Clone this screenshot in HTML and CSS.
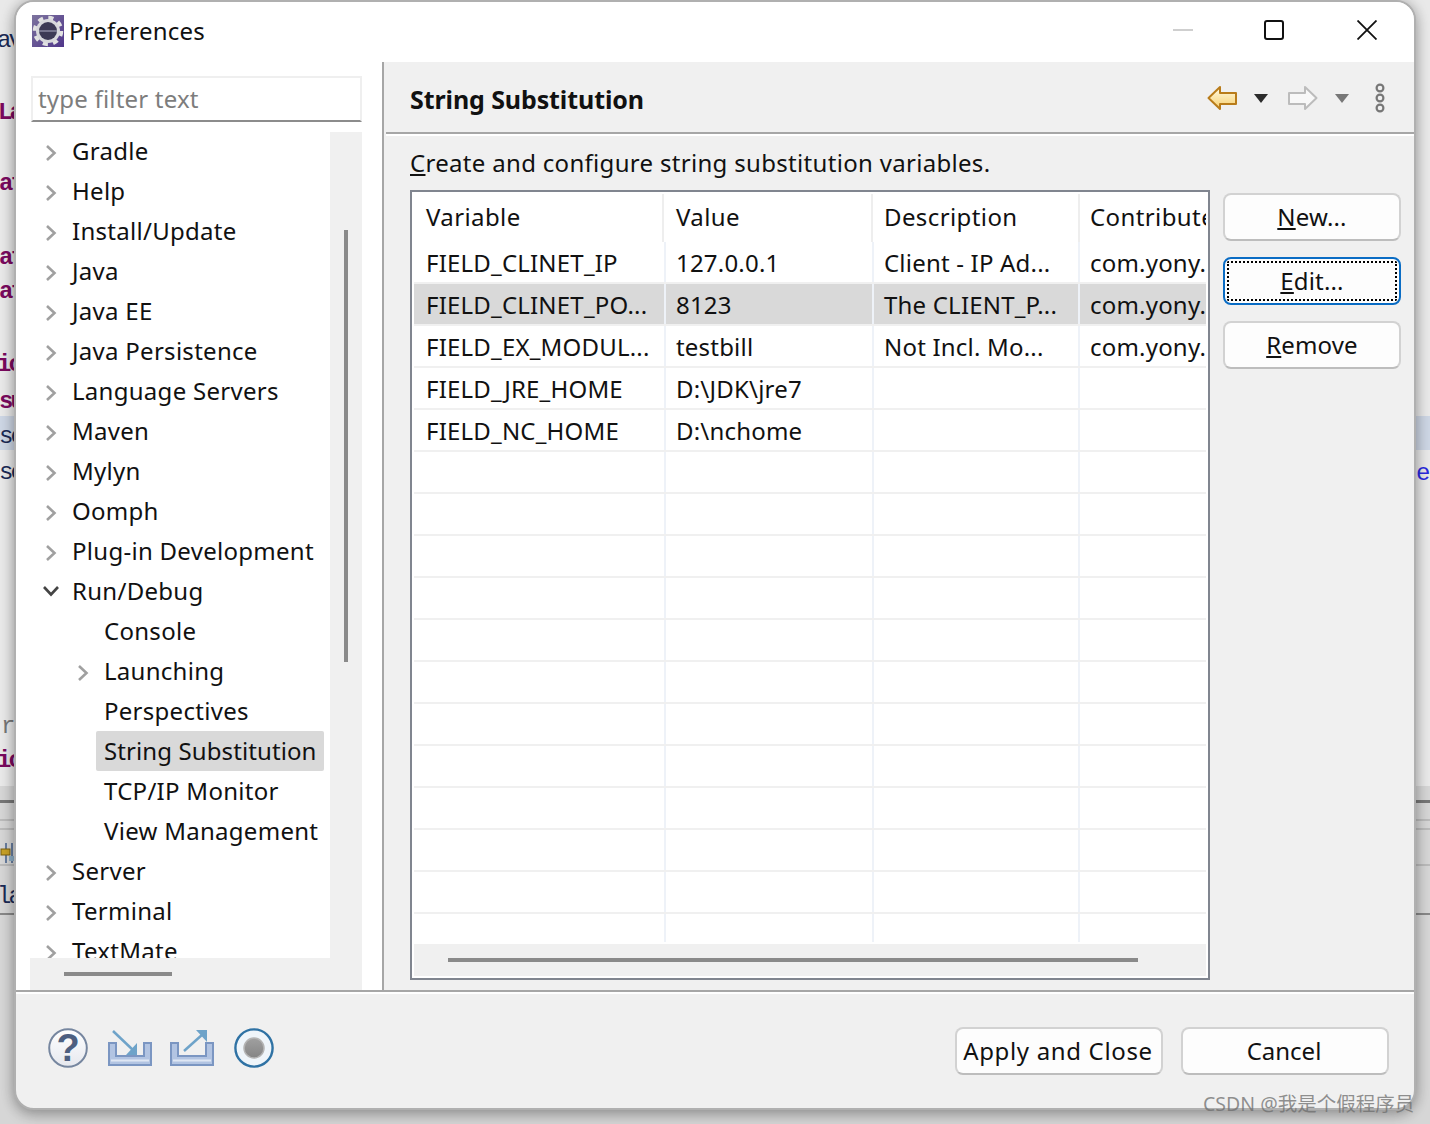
FILE: index.html
```html
<!DOCTYPE html>
<html lang="en">
<head>
<meta charset="utf-8">
<title>Preferences</title>
<link rel="stylesheet" href="styles.css">
</head>
<body>
<div class="desk">
  <div class="band band-hl"></div>
  <div class="band band-low"></div>
  <div class="band band-dark"></div>
  <div class="band line-a"></div>
  <div class="band line-b"></div>
  <div class="band line-c"></div>
  <div class="band line-d"></div>
  <span class="frag navy f1">av</span>
  <span class="frag purple f2">La</span>
  <span class="frag purple f3">at</span>
  <span class="frag purple f4">at</span>
  <span class="frag purple f5">at</span>
  <span class="frag purple f6">ic</span>
  <span class="frag purple f7">su</span>
  <span class="frag navy f8">se</span>
  <span class="frag navy f9">se</span>
  <span class="frag grey f10">rr</span>
  <span class="frag purple f11">ic</span>
  <span class="frag navy f12">la</span>
  <span class="frag blue f13">e</span>
  <svg class="frag f14" width="16" height="24" viewBox="0 0 16 24"><path d="M6 0V20M12 0V20" stroke="#44618f" stroke-width="1.5"/><rect x="1" y="6" width="9" height="6" fill="#c9a227" stroke="#7b6012"/><rect x="9" y="13" width="7" height="5" fill="#8fb0c8"/></svg>
</div>

<main class="window">
  <header class="titlebar">
    <div class="title-left">
      <svg class="app-icon" width="32" height="32" viewBox="0 0 32 32">
        <defs><linearGradient id="pg" x1="0" y1="0" x2="1" y2="1"><stop offset="0" stop-color="#7d749e"/><stop offset="1" stop-color="#50368a"/></linearGradient></defs>
        <rect width="32" height="32" fill="url(#pg)"/>
        <circle cx="16" cy="16" r="13" fill="none" stroke="#e2e2e2" stroke-width="4.500" stroke-dasharray="5 5.200"/>
        <circle cx="16" cy="16" r="12" fill="#d8d8dc"/>
        <circle cx="16" cy="16" r="9" fill="#3d3a55"/>
        <path d="M7 16H25" stroke="#8a88a0" stroke-width="1.500"/>
      </svg>
      <span class="title-text">Preferences</span>
    </div>
    <div class="win-controls">
      <svg width="20" height="20" viewBox="0 0 20 20"><path d="M0 10H20" stroke="#cfcfcf" stroke-width="2"/></svg>
      <svg width="20" height="20" viewBox="0 0 20 20"><rect x="1" y="1" width="18" height="18" rx="2" fill="none" stroke="#111" stroke-width="2"/></svg>
      <svg width="20" height="20" viewBox="0 0 20 20"><path d="M0.5 0.5L19.5 19.5M19.5 0.5L0.5 19.5" stroke="#111" stroke-width="1.800"/></svg>
    </div>
  </header>

  <div class="main">
    <aside class="nav">
      <input class="filter" type="text" placeholder="type filter text">
      <div class="tree-area">
        <ul class="tree">
          <li class="node"><svg class="chev" width="12" height="18" viewBox="0 0 12 18"><path d="M2 2L9.500 9L2 16"/></svg><span>Gradle</span></li>
          <li class="node"><svg class="chev" width="12" height="18" viewBox="0 0 12 18"><path d="M2 2L9.500 9L2 16"/></svg><span>Help</span></li>
          <li class="node"><svg class="chev" width="12" height="18" viewBox="0 0 12 18"><path d="M2 2L9.500 9L2 16"/></svg><span>Install/Update</span></li>
          <li class="node"><svg class="chev" width="12" height="18" viewBox="0 0 12 18"><path d="M2 2L9.500 9L2 16"/></svg><span>Java</span></li>
          <li class="node"><svg class="chev" width="12" height="18" viewBox="0 0 12 18"><path d="M2 2L9.500 9L2 16"/></svg><span>Java EE</span></li>
          <li class="node"><svg class="chev" width="12" height="18" viewBox="0 0 12 18"><path d="M2 2L9.500 9L2 16"/></svg><span>Java Persistence</span></li>
          <li class="node"><svg class="chev" width="12" height="18" viewBox="0 0 12 18"><path d="M2 2L9.500 9L2 16"/></svg><span>Language Servers</span></li>
          <li class="node"><svg class="chev" width="12" height="18" viewBox="0 0 12 18"><path d="M2 2L9.500 9L2 16"/></svg><span>Maven</span></li>
          <li class="node"><svg class="chev" width="12" height="18" viewBox="0 0 12 18"><path d="M2 2L9.500 9L2 16"/></svg><span>Mylyn</span></li>
          <li class="node"><svg class="chev" width="12" height="18" viewBox="0 0 12 18"><path d="M2 2L9.500 9L2 16"/></svg><span>Oomph</span></li>
          <li class="node"><svg class="chev" width="12" height="18" viewBox="0 0 12 18"><path d="M2 2L9.500 9L2 16"/></svg><span>Plug-in Development</span></li>
          <li class="node"><svg class="chev-down" width="18" height="12" viewBox="0 0 18 12"><path d="M2 2L9 9.500L16 2"/></svg><span>Run/Debug</span></li>
          <li class="node child"><span>Console</span></li>
          <li class="node child-exp"><svg class="chev" width="12" height="18" viewBox="0 0 12 18"><path d="M2 2L9.500 9L2 16"/></svg><span>Launching</span></li>
          <li class="node child"><span>Perspectives</span></li>
          <li class="node child selected"><span>String Substitution</span></li>
          <li class="node child"><span>TCP/IP Monitor</span></li>
          <li class="node child"><span>View Management</span></li>
          <li class="node"><svg class="chev" width="12" height="18" viewBox="0 0 12 18"><path d="M2 2L9.500 9L2 16"/></svg><span>Server</span></li>
          <li class="node"><svg class="chev" width="12" height="18" viewBox="0 0 12 18"><path d="M2 2L9.500 9L2 16"/></svg><span>Terminal</span></li>
          <li class="node"><svg class="chev" width="12" height="18" viewBox="0 0 12 18"><path d="M2 2L9.500 9L2 16"/></svg><span>TextMate</span></li>
        </ul>
        <div class="vtrack"><div class="vthumb"></div></div>
      </div>
      <div class="htrack"><div class="hthumb"></div></div>
    </aside>
    <div class="sash"></div>

    <section class="page">
      <div class="page-head">
        <h1 class="page-title">String Substitution</h1>
        <div class="page-tools">
          <svg width="30" height="26" viewBox="0 0 30 26"><defs><linearGradient id="ya" x1="0" y1="0" x2="0" y2="1"><stop offset="0" stop-color="#fffbe6"/><stop offset="1" stop-color="#f7cf6c"/></linearGradient></defs><path d="M1.500 13L13 2V8H29V19H13V24Z" fill="url(#ya)" stroke="#b97c1a" stroke-width="2" stroke-linejoin="round"/></svg>
          <svg class="caret" width="14" height="9" viewBox="0 0 14 9"><path d="M0 0H14L7 9Z" fill="#2b2b2b"/></svg>
          <svg class="fwd" width="30" height="26" viewBox="0 0 30 26"><path d="M28.500 13L17 2V8H1V19H17V24Z" fill="#f8f8f8" stroke="#bcbcbc" stroke-width="2" stroke-linejoin="round"/></svg>
          <svg class="caret" width="14" height="9" viewBox="0 0 14 9"><path d="M0 0H14L7 9Z" fill="#777"/></svg>
          <svg class="menu" width="10" height="30" viewBox="0 0 10 30"><g fill="none" stroke="#777" stroke-width="2.200"><circle cx="5" cy="5" r="3.400"/><circle cx="5" cy="15" r="3.400"/><circle cx="5" cy="25" r="3.400"/></g></svg>
        </div>
      </div>
      <div class="page-body">
        <p class="desc"><u>C</u>reate and configure string substitution variables.</p>
        <div class="editor">
          <div class="table">
            <div class="thead">
              <div class="th">Variable</div>
              <div class="th">Value</div>
              <div class="th">Description</div>
              <div class="th">Contributed By</div>
            </div>
            <div class="tbody">
              <div class="tr"><div class="td">FIELD_CLINET_IP</div><div class="td">127.0.0.1</div><div class="td">Client - IP Ad...</div><div class="td">com.yony.studio</div></div>
              <div class="tr sel"><div class="td">FIELD_CLINET_PO...</div><div class="td">8123</div><div class="td">The CLIENT_P...</div><div class="td">com.yony.studio</div></div>
              <div class="tr"><div class="td">FIELD_EX_MODUL...</div><div class="td">testbill</div><div class="td">Not Incl. Mo...</div><div class="td">com.yony.studio</div></div>
              <div class="tr"><div class="td">FIELD_JRE_HOME</div><div class="td">D:\JDK\jre7</div><div class="td"></div><div class="td"></div></div>
              <div class="tr"><div class="td">FIELD_NC_HOME</div><div class="td">D:\nchome</div><div class="td"></div><div class="td"></div></div>
              <div class="tr"><div class="td"></div><div class="td"></div><div class="td"></div><div class="td"></div></div>
              <div class="tr"><div class="td"></div><div class="td"></div><div class="td"></div><div class="td"></div></div>
              <div class="tr"><div class="td"></div><div class="td"></div><div class="td"></div><div class="td"></div></div>
              <div class="tr"><div class="td"></div><div class="td"></div><div class="td"></div><div class="td"></div></div>
              <div class="tr"><div class="td"></div><div class="td"></div><div class="td"></div><div class="td"></div></div>
              <div class="tr"><div class="td"></div><div class="td"></div><div class="td"></div><div class="td"></div></div>
              <div class="tr"><div class="td"></div><div class="td"></div><div class="td"></div><div class="td"></div></div>
              <div class="tr"><div class="td"></div><div class="td"></div><div class="td"></div><div class="td"></div></div>
              <div class="tr"><div class="td"></div><div class="td"></div><div class="td"></div><div class="td"></div></div>
              <div class="tr"><div class="td"></div><div class="td"></div><div class="td"></div><div class="td"></div></div>
              <div class="tr"><div class="td"></div><div class="td"></div><div class="td"></div><div class="td"></div></div>
              <div class="tr"><div class="td"></div><div class="td"></div><div class="td"></div><div class="td"></div></div>
            </div>
            <div class="table-scroll"><div class="table-thumb"></div></div>
          </div>
          <div class="side-buttons">
            <button class="btn"><u>N</u>ew...</button>
            <button class="btn focus"><span class="focus-ring"><u>E</u>dit...</span></button>
            <button class="btn"><u>R</u>emove</button>
          </div>
        </div>
      </div>
    </section>
  </div>

  <footer class="footer">
    <div class="foot-icons">
      <svg width="40" height="40" viewBox="0 0 40 40"><defs><linearGradient id="hg" x1="0" y1="0" x2="0" y2="1"><stop offset="0" stop-color="#fff"/><stop offset="1" stop-color="#e6e8ee"/></linearGradient></defs><circle cx="20" cy="20" r="18.800" fill="url(#hg)" stroke="#76869f" stroke-width="2"/><text class="help-mark" x="20" y="33" text-anchor="middle">?</text></svg>
      <svg width="44" height="36" viewBox="0 0 44 36"><path d="M1 13H8V26H36V13H43V35H1Z" fill="#b2c4e2" stroke="#7b96c2" stroke-width="2"/><path d="M3 30.500H41" stroke="#dfe7f4" stroke-width="2"/><path d="M5 1L26 21" stroke="#6ea3c9" stroke-width="2.500"/><path d="M29 25H18L29 13Z" fill="#6ea3c9"/></svg>
      <svg width="44" height="36" viewBox="0 0 44 36"><path d="M1 13H8V26H36V13H43V35H1Z" fill="#b2c4e2" stroke="#7b96c2" stroke-width="2"/><path d="M3 30.500H41" stroke="#dfe7f4" stroke-width="2"/><path d="M14 21L33 4" stroke="#6ea3c9" stroke-width="2.500"/><path d="M37 0H26L37 12Z" fill="#6ea3c9"/></svg>
      <svg width="40" height="40" viewBox="0 0 40 40"><defs><linearGradient id="rg" x1="0" y1="0" x2="0" y2="1"><stop offset="0" stop-color="#a0a0a0"/><stop offset="1" stop-color="#858585"/></linearGradient></defs><circle cx="20" cy="20" r="18.600" fill="#eff5fa" stroke="#2f72a4" stroke-width="2.400"/><circle cx="20" cy="20" r="10" fill="url(#rg)" stroke="#b4b4b4" stroke-width="1.500"/></svg>
    </div>
    <div class="foot-buttons">
      <button class="btn wide spaced">Apply and Close</button>
      <button class="btn wide">Cancel</button>
    </div>
  </footer>
</main>
<div class="watermark">CSDN @我是个假程序员</div>
</body>
</html>
```
FILE: styles.css
```css
* { box-sizing: border-box; }
html, body { margin: 0; height: 100%; }
body {
  width: 1430px;
  height: 1124px;
  overflow: hidden;
  position: relative;
  background: #e9e9e9;
  font-family: "Noto Sans", "Noto Sans CJK SC", sans-serif;
  font-size: 24px;
  color: #111;
}
.desk { position: absolute; inset: 0; overflow: hidden; }
.band { position: absolute; left: 0; width: 100%; }
.band-hl { top: 416px; height: 34px; background: #cdd6e4; }
.band-low { top: 786px; bottom: 0; background: #d6d6d6; }
.band-dark { top: 800px; height: 3px; background: #777; }
.line-a { top: 819px; height: 2px; background: #bbb; }
.line-b { top: 828px; height: 2px; background: #bbb; }
.line-c { top: 864px; height: 2px; background: #bbb; }
.line-d { top: 913px; height: 2px; background: #888; }
.frag { position: absolute; font-family: "Liberation Mono", monospace; font-size: 24px; line-height: 30px; letter-spacing: -3px; white-space: nowrap; }
.navy { color: #1a2a55; }
.purple { color: #7a0a5e; font-weight: 700; }
.grey { color: #777; }
.blue { color: #2a2ae0; }
.f1 { left: -3px; top: 26px; }
.f2 { left: -2px; top: 98px; }
.f3 { left: -1px; top: 169px; }
.f4 { left: -1px; top: 243px; }
.f5 { left: -1px; top: 277px; }
.f6 { left: -3px; top: 350px; }
.f7 { left: -1px; top: 387px; }
.f8 { left: -1px; top: 422px; }
.f9 { left: -1px; top: 458px; }
.f10 { left: 1px; top: 712px; }
.f11 { left: -3px; top: 746px; }
.f12 { left: -3px; top: 882px; }
.f13 { left: 1416px; top: 459px; }
.f14 { left: 0; top: 843px; }

.window {
  position: absolute;
  left: 14px;
  top: 0;
  width: 1402px;
  height: 1110px;
  display: flex;
  flex-direction: column;
  background: #f0f0f0;
  border: 2px solid #b0b0b0;
  border-radius: 20px;
  box-shadow: 0 0 14px rgba(0,0,0,.22), 0 6px 14px rgba(0,0,0,.2);
  overflow: hidden;
}
.titlebar {
  height: 60px;
  flex: none;
  background: #fff;
  display: flex;
  justify-content: space-between;
  align-items: center;
  padding: 0 37px 0 16px;
}
.title-left { display: flex; align-items: center; gap: 5px; margin-top: -3px; }
.app-icon { display: block; }
.title-text { font-size: 24px; letter-spacing: .2px; color: #111; line-height: 32px; }
.win-controls { display: flex; gap: 73px; margin-top: -4px; }
.win-controls svg { display: block; }
.win-controls svg:first-child { margin-right: -2px; }

.main { flex: 1; min-height: 0; display: flex; }
.nav {
  width: 366px;
  flex: none;
  background: #fff;
  padding: 14px 20px 0 14px;
  display: flex;
  flex-direction: column;
}
.filter {
  display: block;
  width: 331px;
  height: 46px;
  margin-left: 1px;
  padding: 0 5px 2px;
  border: 2px solid #efefef;
  border-bottom-color: #8c8c8c;
  font: inherit;
  font-size: 24px;
  letter-spacing: .2px;
  outline: none;
  background: #fff;
  flex: none;
}
.filter::placeholder { color: #7d7d7d; opacity: 1; }
.tree-area { margin-top: 10px; width: 332px; height: 826px; display: flex; flex: none; }
.tree { list-style: none; margin: 0; padding: 0; width: 300px; height: 100%; overflow: hidden; background: #fff; }
.node { height: 40px; display: flex; align-items: center; padding-left: 15px; white-space: nowrap; }
.node span { margin-left: 15px; height: 40px; line-height: 40px; font-size: 24px; letter-spacing: .28px; color: #111; }
.tree .node:first-child { margin-top: -1px; }
.chev { flex: none; margin-top: 3px; }
.chev path { fill: none; stroke: #a0a0a0; stroke-width: 2.6; }
.chev-down { flex: none; margin-left: -3px; margin-right: -3px; }
.chev-down path { fill: none; stroke: #444; stroke-width: 2.6; }
.child { padding-left: 66px; }
.child span { margin-left: 0; padding: 0 8px; width: 228px; }
.child-exp { padding-left: 47px; }
.selected span { background: #d9d9d9; border-radius: 2px; letter-spacing: .1px; }
.vtrack { width: 32px; background: #f0f0f0; padding: 98px 0 0 14px; }
.vthumb { width: 4px; height: 432px; background: #8a8a8a; }
.htrack { width: 332px; height: 32px; background: #f0f0f0; padding: 14px 0 0 34px; flex: none; }
.hthumb { width: 108px; height: 4px; background: #8a8a8a; }
.sash { width: 2px; flex: none; background: #a6a6a6; }

.page { flex: 1; min-width: 0; display: flex; flex-direction: column; }
.page-head {
  height: 72px;
  flex: none;
  margin-left: 2px;
  border-bottom: 2px solid #a6a6a6;
  box-shadow: 0 2px 0 #fff;
  display: flex;
  align-items: center;
  justify-content: space-between;
  padding: 4px 29px 0 24px;
}
.page-title { margin: 0; font-size: 25px; letter-spacing: -.1px; font-weight: 700; color: #111; }
.page-tools { display: flex; align-items: center; margin-top: -2px; }
.page-tools svg { display: block; flex: none; }
.caret { margin-left: 17px; }
.fwd { margin-left: 20px; }
.menu { margin-left: 26px; }
.page-body { flex: 1; min-height: 0; padding: 0 13px 0 26px; }
.desc { margin: 0; height: 56px; line-height: 58px; font-size: 24px; letter-spacing: .31px; }
.editor { display: flex; gap: 13px; }
.table {
  width: 800px;
  height: 790px;
  flex: none;
  border: 2px solid #80858f;
  background: #fff;
  padding: 0 2px;
  display: flex;
  flex-direction: column;
}
.thead { height: 50px; flex: none; display: grid; grid-template-columns: 248px 207px 205px 1fr; column-gap: 2px; align-items: center; background: linear-gradient(#fff 2px, #eee 2px); }
.th { height: 100%; background: #fff; padding: 0 0 0 12px; line-height: 50px; font-size: 24px; letter-spacing: .4px; overflow: hidden; white-space: nowrap; }
.th:nth-child(2) { padding-left: 12px; }
.th:nth-child(3) { padding-left: 11px; }
.th:nth-child(4) { padding-left: 10px; }
.tbody { height: 700px; flex: none; overflow: hidden; }
.tr { height: 42px; display: grid; grid-template-columns: 250px 206px 204px 126px; column-gap: 2px; background: #eef2f8; border-bottom: 2px solid #f0f0f0; }
.td { height: 40px; line-height: 42px; background: #fff; padding-left: 10px; font-size: 24px; letter-spacing: .2px; white-space: nowrap; overflow: hidden; }
.td:first-child { padding-left: 12px; }
.sel .td { background: #d9d9d9; }
.table-scroll { margin-top: 2px; height: 32px; flex: none; background: #f0f0f0; padding: 14px 0 0 34px; }
.table-thumb { width: 690px; height: 4px; background: #8a8a8a; }
.side-buttons { margin-top: 3px; display: flex; flex-direction: column; gap: 16px; }
.btn {
  width: 178px;
  height: 48px;
  padding: 0 0 2px;
  font: inherit;
  font-size: 24px;
  letter-spacing: .15px;
  color: #111;
  background: #fdfdfd;
  border: 2px solid #d2d2d2;
  border-bottom-color: #bdbdbd;
  border-radius: 8px;
}
.focus { border-color: #0a6cc4; padding: 2px; }
.focus-ring { display: block; height: 100%; line-height: 36px; border: 2px dotted #000; border-radius: 2px; }
.footer {
  flex: none;
  height: 118px;
  border-top: 2px solid #a6a6a6;
  box-shadow: inset 0 2px 0 #fff;
  display: flex;
  justify-content: space-between;
  align-items: center;
  padding: 0 25px 0 32px;
}
.foot-icons { display: flex; align-items: center; gap: 18px; margin-top: -4px; }
.foot-icons svg { display: block; flex: none; }
.foot-icons svg:nth-child(2), .foot-icons svg:nth-child(4) { margin-left: 2px; }
.help-mark { font-family: "Liberation Sans", sans-serif; font-weight: 700; font-size: 38px; fill: #4d5f80; }
.foot-buttons { display: flex; gap: 18px; margin-top: 2px; }
.wide { width: 208px; padding: 0 2px 2px 0; letter-spacing: 0; }
.spaced { letter-spacing: .66px; }
.watermark {
  position: absolute;
  left: 1203px;
  top: 1090px;
  font-size: 19.5px;
  line-height: 28px;
  color: rgba(110,110,110,.75);
  white-space: nowrap;
}
```
